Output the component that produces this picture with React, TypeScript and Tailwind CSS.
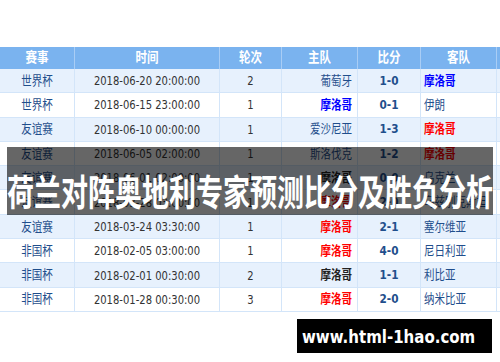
import React from 'react';

type Tone = '' | 'blue' | 'red' | 'dark';

const rows: { cup: string; time: string; round: string; home: string; score: string; away: string; hs: Tone; as: Tone }[] = [
  { cup: '世界杯', time: '2018-06-20 20:00:00', round: '2', home: '葡萄牙', score: '1-0', away: '摩洛哥', hs: '', as: 'blue' },
  { cup: '世界杯', time: '2018-06-15 23:00:00', round: '1', home: '摩洛哥', score: '0-1', away: '伊朗', hs: 'blue', as: '' },
  { cup: '友谊赛', time: '2018-06-10 00:00:00', round: '1', home: '爱沙尼亚', score: '1-3', away: '摩洛哥', hs: '', as: 'red' },
  { cup: '友谊赛', time: '2018-06-05 02:00:00', round: '1', home: '斯洛伐克', score: '1-2', away: '摩洛哥', hs: '', as: 'red' },
  { cup: '友谊赛', time: '2018-06-01 02:00:00', round: '1', home: '摩洛哥', score: '0-0', away: '乌克兰', hs: 'dark', as: '' },
  { cup: '友谊赛', time: '2018-03-28 03:00:00', round: '1', home: '摩洛哥', score: '2-0', away: '乌兹别克斯坦', hs: 'red', as: '' },
  { cup: '友谊赛', time: '2018-03-24 03:30:00', round: '1', home: '摩洛哥', score: '2-1', away: '塞尔维亚', hs: 'red', as: '' },
  { cup: '非国杯', time: '2018-02-05 03:00:00', round: '1', home: '摩洛哥', score: '4-0', away: '尼日利亚', hs: 'red', as: '' },
  { cup: '非国杯', time: '2018-02-01 00:30:00', round: '2', home: '摩洛哥', score: '1-1', away: '利比亚', hs: 'dark', as: '' },
  { cup: '非国杯', time: '2018-01-28 00:30:00', round: '3', home: '摩洛哥', score: '2-0', away: '纳米比亚', hs: 'red', as: '' },
];

const tone = (t: Tone) =>
  t === 'blue'
    ? 'font-bold text-[#0000ff]'
    : t === 'red'
    ? 'font-bold text-[#ff0000]'
    : t === 'dark'
    ? 'font-bold text-[#222222]'
    : 'text-[#1f4e8c]';

const cols = 'grid grid-cols-[75px_145px_62px_76px_63px_76px_60px]';
const txt = 'inline-block scale-y-[1.2]';

export default function App() {
  return (
    <div
      className="relative w-[500px] h-[362px] overflow-hidden bg-white pt-[47px]"
      style={{ fontFamily: '"DejaVu Sans", "Noto Sans CJK SC", sans-serif' }}
    >
      <div className="w-[557px]">
        <div className={`${cols} h-[22px] bg-[#7ab3ef] text-white font-bold text-[11.5px]`}>
          {['赛事', '时间', '轮次', '主队', '比分', '客队', ''].map((h, i) => (
            <div key={i} className="flex items-center justify-center border-r border-[#a9cdf5]">
              <span className={txt}>{h}</span>
            </div>
          ))}
        </div>
        {rows.map((r, i) => (
          <div
            key={i}
            className={`${cols} h-[24.3px] border-b border-[#d3e5f9] text-[10.5px] ${i % 2 === 0 ? 'bg-[#e7f1fd]' : 'bg-white'}`}
          >
            <div className="flex items-center justify-center border-r border-[#d3e5f9] text-[#1f4e8c]">
              <span className={txt}>{r.cup}</span>
            </div>
            <div className="flex items-center justify-center border-r border-[#d3e5f9] text-[10px] text-[#333333]">
              <span className={txt}>{r.time}</span>
            </div>
            <div className="flex items-center justify-center border-r border-[#d3e5f9] text-[10px] text-[#333333]">
              <span className={txt}>{r.round}</span>
            </div>
            <div className={`flex items-center justify-end pr-[5px] border-r border-[#d3e5f9] ${tone(r.hs)}`}>
              <span className={txt}>{r.home}</span>
            </div>
            <div className="flex items-center justify-center border-r border-[#d3e5f9] font-bold text-[10.5px] text-[#1f4e8c]">
              <span className={txt}>{r.score}</span>
            </div>
            <div className={`flex items-center justify-start pl-[3px] border-r border-[#d3e5f9] ${tone(r.as)}`}>
              <span className={txt}>{r.away}</span>
            </div>
            <div className="border-r border-[#d3e5f9]" />
          </div>
        ))}
      </div>

      <div className="absolute left-[7px] top-[147px] w-[486px] h-[68px] bg-black/60 flex items-end justify-center pb-[11px]">
        <span
          className="inline-block scale-y-[1.35] text-white font-bold text-[27px] leading-none whitespace-nowrap"
          style={{ fontFamily: '"Noto Sans CJK SC", sans-serif' }}
        >
          荷兰对阵奥地利专家预测比分及胜负分析
        </span>
      </div>

      <div className="absolute left-[297px] top-[319px] w-[195px] h-[34px] bg-black flex items-center pl-[5px] pt-[3px]">
        <span
          className="inline-block scale-y-[1.17] text-white font-bold text-[15px] leading-none"
          style={{ fontFamily: '"DejaVu Sans", sans-serif' }}
        >
          www.html-1hao.com
        </span>
      </div>
    </div>
  );
}
